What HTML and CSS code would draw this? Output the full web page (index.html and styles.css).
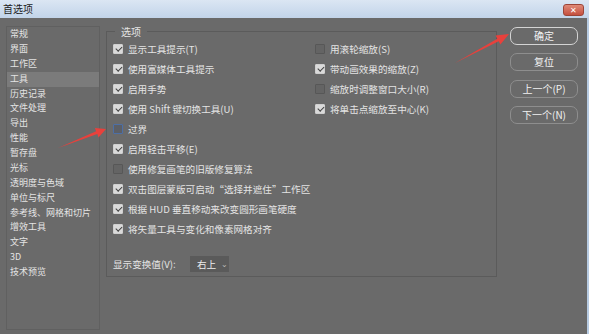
FILE: index.html
```html
<!DOCTYPE html>
<html lang="zh-CN">
<head>
  <meta charset="UTF-8">
  <title>首选项</title>
  <link rel="stylesheet" href="styles.css">
</head>
<body>
  <div class="window">
    <div class="titlebar">
      <span class="title">首选项</span>
      <span class="close">✕</span>
    </div>

    <div class="dialog">
      <!-- Category list -->
      <ul class="sidebar">
        <li>常规</li>
        <li>界面</li>
        <li>工作区</li>
        <li class="selected">工具</li>
        <li>历史记录</li>
        <li>文件处理</li>
        <li>导出</li>
        <li>性能</li>
        <li>暂存盘</li>
        <li>光标</li>
        <li>透明度与色域</li>
        <li>单位与标尺</li>
        <li>参考线、网格和切片</li>
        <li>增效工具</li>
        <li>文字</li>
        <li>3D</li>
        <li>技术预览</li>
      </ul>

      <!-- Options group -->
      <div class="group">
        <div class="legend">选项</div>
        <div class="options">
          <div class="col col-left">
            <div class="row"><span class="box on"></span>显示工具提示(T)</div>
            <div class="row"><span class="box on"></span>使用富媒体工具提示</div>
            <div class="row"><span class="box on"></span>启用手势</div>
            <div class="row"><span class="box on"></span>使用 Shift 键切换工具(U)</div>
            <div class="row"><span class="box focus"></span>过界</div>
            <div class="row"><span class="box on"></span>启用轻击平移(E)</div>
            <div class="row"><span class="box"></span>使用修复画笔的旧版修复算法</div>
            <div class="row"><span class="box on"></span>双击图层蒙版可启动“选择并遮住”工作区</div>
            <div class="row"><span class="box on"></span>根据 HUD 垂直移动来改变圆形画笔硬度</div>
            <div class="row"><span class="box on"></span>将矢量工具与变化和像素网格对齐</div>
          </div>
          <div class="col">
            <div class="row"><span class="box"></span>用滚轮缩放(S)</div>
            <div class="row"><span class="box on"></span>带动画效果的缩放(Z)</div>
            <div class="row"><span class="box"></span>缩放时调整窗口大小(R)</div>
            <div class="row"><span class="box on"></span>将单击点缩放至中心(K)</div>
          </div>
        </div>
        <div class="transform">
          <span class="transform-label">显示变换值(V):</span>
          <span class="select">右上<span class="chevron">⌄</span></span>
        </div>
      </div>

      <!-- Dialog buttons -->
      <div class="buttons">
        <div class="btn primary">确定</div>
        <div class="btn">复位</div>
        <div class="btn">上一个(P)</div>
        <div class="btn">下一个(N)</div>
      </div>
    </div>

    <!-- Red annotation arrows -->
    <svg class="annotations" width="589" height="334" viewBox="0 0 589 334">
      <polygon points="455,63 498.7,41.3 500.4,44.4 509,34 495.6,35.6 497.3,38.7" fill="#e8413c"/>
      <polygon points="58,148 97.3,134.1 98.5,137.4 106,129 94.9,128 96.1,131.3" fill="#e8413c"/>
    </svg>
  </div>
</body>
</html>
```

FILE: styles.css
```css
body {
  margin: 0;
  background-color: #6a6a6a;
  font-family: "Noto Sans CJK SC", "Noto Sans", sans-serif;
}

.window {
  position: relative;
  width: 589px;
  height: 334px;
  overflow: hidden;
}

.titlebar {
  display: flex;
  justify-content: space-between;
  align-items: center;
  height: 18px;
  padding: 0 5px 0 3px;
  background: linear-gradient(#dbe6f3, #c2d4e9);
}

.title {
  font-size: 10px;
  line-height: 12px;
  color: #1c1c1c;
}

.close {
  width: 21px;
  height: 12px;
  margin-top: 2px;
  border: 1px solid #9c4538;
  border-radius: 3px;
  box-sizing: border-box;
  background: linear-gradient(#e08a78, #c5503f);
  color: #fff;
  font-size: 8px;
  line-height: 10px;
  text-align: center;
}

.dialog {
  display: flex;
  align-items: flex-start;
  height: 316px;
  padding: 8px 0 0 6px;
  box-sizing: border-box;
  border-right: 2px solid #b7cbe2;
  background-color: #6a6a6a;
  color: #e4e4e4;
}

/* Category list */
.sidebar {
  width: 94px;
  height: 304px;
  margin: 0;
  padding: 0;
  box-sizing: border-box;
  list-style: none;
  border: 1px solid #606060;
  font-size: 9px;
}

.sidebar li {
  height: 14.875px;
  line-height: 14.875px;
  padding-left: 3px;
  white-space: nowrap;
}

.sidebar .selected {
  background-color: #7b7b7b;
}

/* Options group */
.group {
  width: 391px;
  height: 246px;
  margin: 5px 0 0 6px;
  padding: 0 0 0 6px;
  box-sizing: border-box;
  border: 1px solid #5b5b5b;
  font-size: 9.6px;
}

.legend {
  width: fit-content;
  margin: -7px 0 0 2px;
  padding: 0 6px;
  height: 13px;
  line-height: 13px;
  font-size: 10px;
  background-color: #6a6a6a;
}

.options {
  display: flex;
  margin-top: 1px;
}

.col-left {
  width: 202px;
}

.row {
  display: flex;
  align-items: center;
  gap: 5px;
  height: 20px;
  white-space: nowrap;
}

.box {
  position: relative;
  flex: none;
  width: 10px;
  height: 10px;
  box-sizing: border-box;
  border: 1px solid #575757;
  border-radius: 1px;
  background-color: #646464;
}

.box.on {
  border-color: #cfcfcf;
  background-color: #dadada;
}

.box.on::after {
  content: "";
  position: absolute;
  left: 2.5px;
  top: 0;
  width: 2.5px;
  height: 5px;
  border: solid #404040;
  border-width: 0 1.6px 1.6px 0;
  transform: rotate(45deg);
}

.box.focus {
  border-color: #4d6fa6;
  background-color: #5c5f66;
}

.transform {
  display: flex;
  align-items: center;
  height: 16px;
  margin-top: 17px;
}

.transform-label {
  width: 77px;
  white-space: nowrap;
}

.select {
  display: flex;
  align-items: center;
  width: 39px;
  height: 16px;
  padding-left: 7px;
  box-sizing: border-box;
  background-color: #5a5a5a;
  color: #eee;
}

.chevron {
  margin-left: 5px;
  font-size: 8px;
  line-height: 8px;
  color: #bbb;
}

/* Dialog buttons */
.buttons {
  display: flex;
  flex-direction: column;
  gap: 8.3px;
  width: 68px;
  margin: 1px 0 0 13px;
}

.btn {
  height: 18px;
  line-height: 16px;
  box-sizing: border-box;
  border: 1px solid #8e8e8e;
  border-radius: 7px;
  text-align: center;
  font-size: 10px;
  color: #f2f2f2;
}

.btn.primary {
  border: 1.5px solid #d4d4d4;
}

.annotations {
  position: absolute;
  top: 0;
  left: 0;
  pointer-events: none;
}
```
